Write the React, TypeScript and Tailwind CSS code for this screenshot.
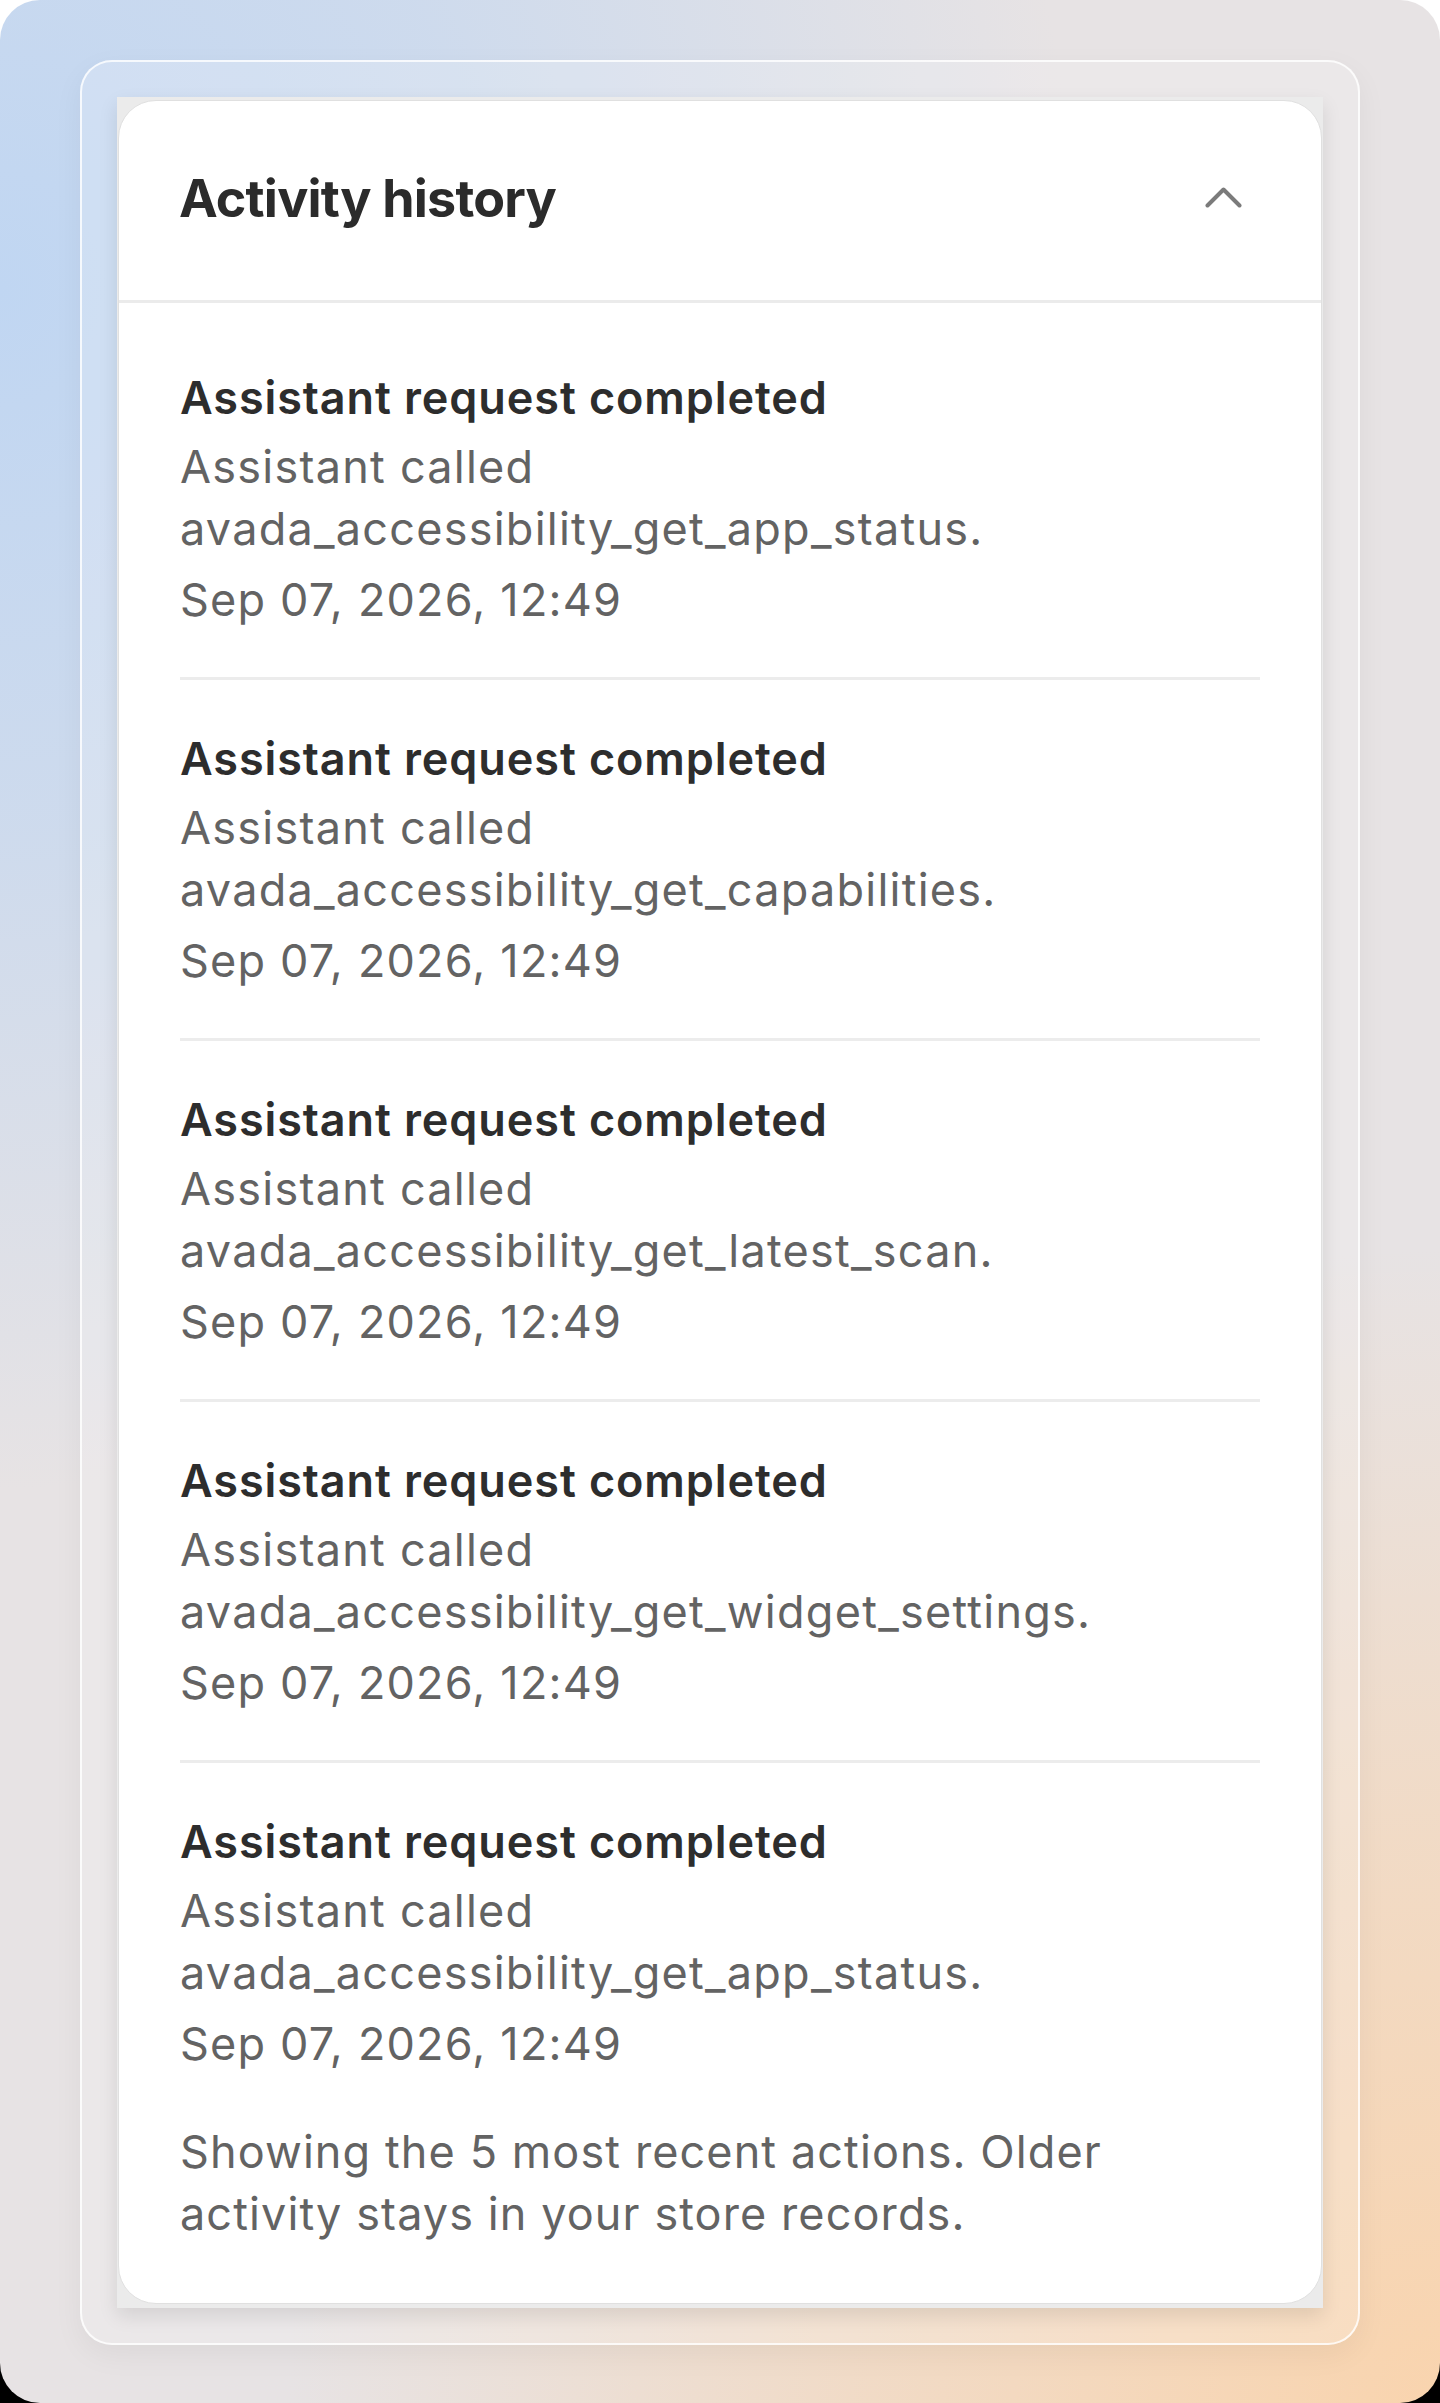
import React from "react";

type Activity = {
  title: string;
  tool: string;
  time: string;
};

const activities: Activity[] = [
  { title: "Assistant request completed", tool: "avada_accessibility_get_app_status", time: "Sep 07, 2026, 12:49" },
  { title: "Assistant request completed", tool: "avada_accessibility_get_capabilities", time: "Sep 07, 2026, 12:49" },
  { title: "Assistant request completed", tool: "avada_accessibility_get_latest_scan", time: "Sep 07, 2026, 12:49" },
  { title: "Assistant request completed", tool: "avada_accessibility_get_widget_settings", time: "Sep 07, 2026, 12:49" },
  { title: "Assistant request completed", tool: "avada_accessibility_get_app_status", time: "Sep 07, 2026, 12:49" },
];

function ChevronUp() {
  return (
    <svg width="37" height="21" viewBox="0 0 37 21" fill="none" aria-hidden="true">
      <polyline
        points="2.5,18.5 18.5,2.5 34.5,18.5"
        stroke="#7b7b7b"
        strokeWidth="4"
        strokeLinecap="round"
        strokeLinejoin="round"
      />
    </svg>
  );
}

function ActivityRow({ item, last }: { item: Activity; last: boolean }) {
  return (
    <div
      className={
        last
          ? "mx-[61px] pt-[48px] pb-[46px]"
          : "mx-[61px] border-b-[3px] border-[#ececec] pt-[48px] pb-[46px]"
      }
    >
      <div className="text-[45px] leading-[62px] font-semibold tracking-[0.9px] text-[#2d2d2d]">{item.title}</div>
      <div className="mt-[7px] text-[45px] leading-[62px] tracking-[1.25px] text-[#636363]">
        Assistant called
        <br />
        {item.tool}.
      </div>
      <div className="mt-[9px] text-[45px] leading-[62px] tracking-[1.2px] text-[#636363]">{item.time}</div>
    </div>
  );
}

export default function App() {
  return (
    <div className="h-[2403px] w-full bg-[linear-gradient(to_bottom,#ffffff_50%,#000000_50%)] font-['Inter','Liberation_Sans',sans-serif]">
      <div className="h-full w-full rounded-[40px] bg-[#e7e3e4] bg-[radial-gradient(ellipse_75%_50%_at_0%_12%,#c0d6f2_0%,rgba(192,214,242,0.65)_45%,transparent_100%),radial-gradient(ellipse_80%_48%_at_100%_100%,#f9d4ae_0%,rgba(249,212,174,0.55)_50%,transparent_100%)] px-[80px] pt-[60px]">
        <div className="rounded-[32px] border-2 border-white/80 bg-white/20 p-[35px] shadow-[0_10px_30px_rgba(0,0,0,0.05)]">
          <div className="bg-[#ebebeb] px-[1px] pt-[3px] pb-[4px] shadow-[0_8px_18px_rgba(0,0,0,0.10)]">
            <div className="overflow-hidden rounded-[38px] border border-[#e0e0e0] bg-white">
              <div className="flex h-[202px] items-center justify-between border-b-[3px] border-[#ebebeb] pl-[60px] pr-[79px]">
                <h2 className="-mt-[3px] text-[52px] leading-none font-bold tracking-[-0.8px] text-[#2b2b2b]">
                  Activity history
                </h2>
                <button type="button" className="-mt-[6px] flex items-center">
                  <ChevronUp />
                </button>
              </div>
              <div className="pt-[16px]">
                {activities.map((a, i) => (
                  <ActivityRow key={i} item={a} last={i === activities.length - 1} />
                ))}
              </div>
              <p className="mx-[61px] pb-[58px] text-[45px] leading-[62px] tracking-[1.1px] text-[#636363]">
                Showing the 5 most recent actions. Older activity stays in your store records.
              </p>
            </div>
          </div>
        </div>
      </div>
    </div>
  );
}
